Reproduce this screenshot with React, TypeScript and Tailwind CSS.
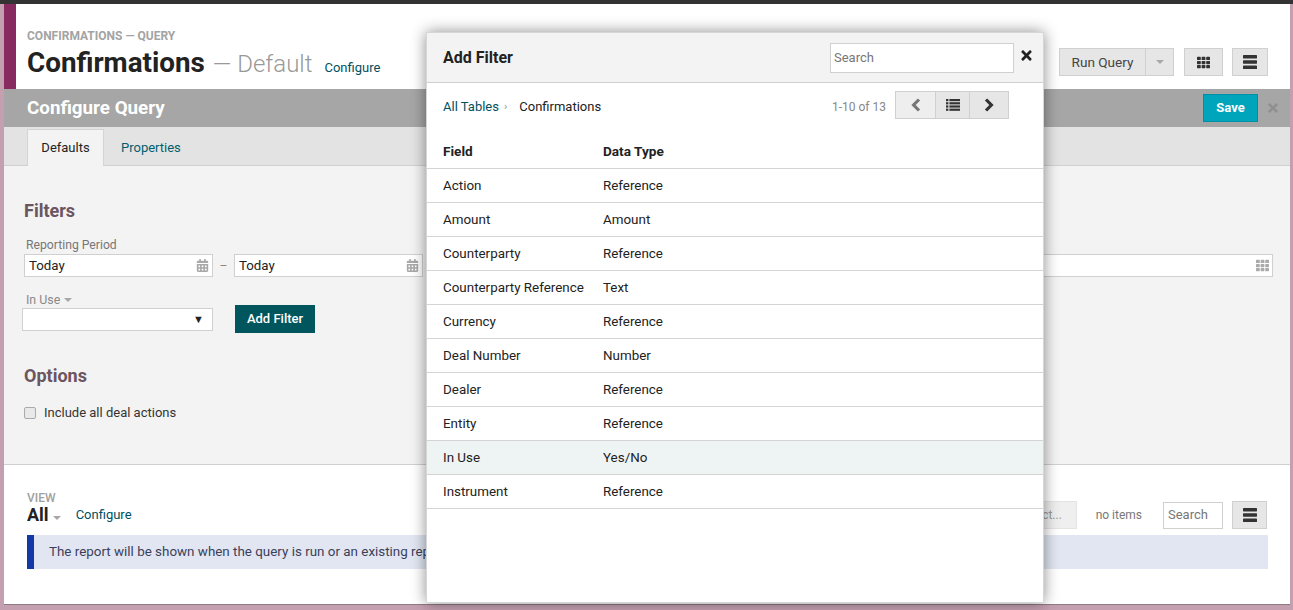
import { FaCalendarAlt, FaTh, FaTimes } from 'react-icons/fa';

const fields = [
  ['Action', 'Reference'],
  ['Amount', 'Amount'],
  ['Counterparty', 'Reference'],
  ['Counterparty Reference', 'Text'],
  ['Currency', 'Reference'],
  ['Deal Number', 'Number'],
  ['Dealer', 'Reference'],
  ['Entity', 'Reference'],
  ['In Use', 'Yes/No'],
  ['Instrument', 'Reference'],
];

const Bars = () => (
  <svg width="14" height="14" viewBox="0 0 14 14" fill="#333">
    <rect x="0" y="0" width="14" height="3.4" rx="0.6" />
    <rect x="0" y="5.3" width="14" height="3.4" rx="0.6" />
    <rect x="0" y="10.6" width="14" height="3.4" rx="0.6" />
  </svg>
);

const Caret = ({ color = '#a8a8a8' }: { color?: string }) => (
  <span className="inline-block h-0 w-0 border-x-[4px] border-t-[4px] border-x-transparent" style={{ borderTopColor: color }} />
);

const Chevron = ({ dir, color }: { dir: 'left' | 'right'; color: string }) => (
  <svg width="10" height="14" viewBox="0 0 10 14" fill="none" stroke={color} strokeWidth="3.2">
    <polyline points={dir === 'left' ? '8,1.5 2.6,7 8,12.5' : '2,1.5 7.4,7 2,12.5'} />
  </svg>
);

const ListIcon = () => (
  <svg width="14" height="12" viewBox="0 0 14 12" fill="#333">
    {[0, 3.2, 6.4, 9.6].map((y) => (
      <g key={y}>
        <rect x="0" y={y} width="2.4" height="2.2" />
        <rect x="3.4" y={y} width="10.6" height="2.2" />
      </g>
    ))}
  </svg>
);

const DateInput = () => (
  <div className="flex h-[23px] w-[189px] items-center justify-between border border-[#d0d0d0] bg-white pl-[4px] pr-[3px] text-[13.3px] text-[#222]">
    <span>Today</span>
    <FaCalendarAlt className="text-[13px] text-[#a9a9a9]" />
  </div>
);

const AddFilterModal = () => (
  <div className="absolute left-[426px] top-[32px] flex h-[571px] w-[618px] flex-col border border-[#d6d6d6] bg-white shadow-[0_0_14px_rgba(0,0,0,0.45)]">
    <div className="flex h-[50px] shrink-0 items-center border-b border-[#cfcfcf] bg-[#f3f3f3] pl-[16px]">
      <span className="text-[16px] font-bold text-[#222]">Add Filter</span>
      <div className="ml-auto flex h-[30px] w-[184px] items-center border border-[#d0d0d0] bg-white pl-[3px] text-[13px] text-[#777]">Search</div>
      <FaTimes className="mb-[5px] ml-[5px] mr-[9px] text-[15px] text-[#222]" />
    </div>
    <div className="flex h-[44px] shrink-0 items-center pl-[16px] pt-[4px] text-[13px]">
      <span className="text-[#00505f]">All Tables</span>
      <span className="ml-[5px] text-[11px] text-[#999]">›</span>
      <span className="ml-[12px] text-[#222]">Confirmations</span>
      <span className="ml-auto text-[12px] text-[#888]">1-10 of 13</span>
      <div className="ml-[9px] mr-[34px] -mt-[4px] flex h-[28px] w-[114px] border border-[#d0d0d0] bg-[#e6e6e6]">
        <span className="flex w-[39px] items-center justify-center bg-[#eeeeee]"><Chevron dir="left" color="#777" /></span>
        <span className="flex w-[35px] items-center justify-center border-x border-[#d0d0d0]"><ListIcon /></span>
        <span className="flex flex-1 items-center justify-center"><Chevron dir="right" color="#333" /></span>
      </div>
    </div>
    <div className="grid h-[42px] shrink-0 grid-cols-[160px_1fr] items-center border-b border-[#d4d4d4] pl-[16px] pt-[8px] text-[13.6px] font-bold text-[#222]">
      <span>Field</span>
      <span>Data Type</span>
    </div>
    {fields.map(([field, type]) => (
      <div
        key={field}
        className={`grid h-[34px] shrink-0 grid-cols-[160px_1fr] items-center border-b border-[#d4d4d4] pl-[16px] pt-[1px] text-[13.4px] text-[#222] ${
          field === 'In Use' ? 'bg-[#eef4f3]' : ''
        }`}
      >
        <span>{field}</span>
        <span>{type}</span>
      </div>
    ))}
  </div>
);

export default function App() {
  return (
    <div className="relative flex h-[610px] flex-col overflow-hidden bg-[#c49fb0] font-['Roboto',sans-serif]">
      <div className="h-[4px] shrink-0 bg-[#333333]" />
      <div className="ml-[4px] mr-[3px] flex h-[601px] shrink-0 flex-col border-b border-[#8f7a84] bg-white">
        {/* Header */}
        <div className="flex h-[85px] shrink-0">
          <div className="w-[12px] bg-[#862a5f]" />
          <div className="pl-[11px] pt-[26px]">
            <div className="text-[12px] font-bold leading-[13px] text-[#a3a3a3]">CONFIRMATIONS — QUERY</div>
            <div className="flex items-baseline pt-[4px] leading-[32px]">
              <span className="text-[27.8px] font-bold text-[#222]">Confirmations</span>
              <span className="ml-[8px] text-[24px] font-light text-[#999]">— Default</span>
              <span className="ml-[12px] text-[13px] text-[#00505f]">Configure</span>
            </div>
          </div>
          <div className="ml-auto flex items-start pr-[22px] pt-[44px]">
            <div className="flex h-[28px] w-[115px] border border-[#d0d0d0] bg-[#e6e6e6] text-[13.6px] text-[#444]">
              <span className="flex flex-1 items-center justify-center border-r border-[#d0d0d0]">Run Query</span>
              <span className="flex w-[27px] items-center justify-center"><Caret /></span>
            </div>
            <div className="ml-[10px] flex h-[28px] w-[39px] items-center justify-center border border-[#d0d0d0] bg-[#e6e6e6] text-[13px] text-[#333]"><FaTh /></div>
            <div className="ml-[9px] flex h-[28px] w-[36px] items-center justify-center border border-[#d0d0d0] bg-[#e6e6e6]"><Bars /></div>
          </div>
        </div>

        {/* Configure bar */}
        <div className="flex h-[38px] shrink-0 items-center bg-[#a6a6a6] pl-[23px] pr-[10px]">
          <span className="text-[18.8px] font-bold text-white">Configure Query</span>
          <div className="ml-auto flex h-[28px] w-[55px] items-center justify-center border border-[#0090a5] bg-[#00a4bb] text-[13px] font-bold text-white">Save</div>
          <FaTimes className="ml-[8px] text-[14px] text-[#8f8f8f]" />
        </div>

        {/* Tabs */}
        <div className="flex h-[39px] shrink-0 items-end border-b border-[#d0d0d0] bg-[#e3e3e3] pl-[23px] text-[13px]">
          <div className="-mb-[1px] flex h-[37px] w-[77px] items-center justify-center border border-b-0 border-[#d4d4d4] bg-[#f3f3f3] text-[#222]">Defaults</div>
          <div className="flex h-[37px] items-center pl-[17px] pt-[2px] text-[#00606f]">Properties</div>
        </div>

        {/* Defaults form */}
        <div className="flex h-[299px] shrink-0 flex-col border-b border-[#d0d0d0] bg-[#f3f3f3] pl-[20px] pr-[17px] pt-[34px]">
          <h2 className="text-[18px] font-bold leading-[21px] text-[#6b5560]">Filters</h2>
          <div className="pl-[2px] pt-[17px] pb-[2px] text-[12.2px] leading-[14px] text-[#777]">Reporting Period</div>
          <div className="flex items-center">
            <DateInput />
            <span className="w-[21px] text-center text-[12px] text-[#888]">–</span>
            <DateInput />
            <div className="ml-auto flex h-[23px] w-[300px] items-center justify-end border border-[#d0d0d0] bg-white pr-[3px] text-[13px] text-[#ababab]"><FaTh /></div>
          </div>
          <div className="flex items-center gap-[4px] pl-[2px] pt-[16px] text-[12.4px] leading-[14px] text-[#8a8a8a]">In Use <Caret /></div>
          <div className="flex items-start">
            <div className="-ml-[2px] mt-[1px] flex h-[23px] w-[191px] items-center justify-end border border-[#d0d0d0] bg-white pr-[8px]">
              <span className="text-[11px] leading-none text-[#222]">▼</span>
            </div>
            <div className="ml-[22px] -mt-[2px] flex h-[28px] w-[80px] items-center justify-center bg-[#00565c] text-[13px] font-medium text-white">Add Filter</div>
          </div>
          <h2 className="pt-[32px] text-[18px] font-bold leading-[21px] text-[#6b5560]">Options</h2>
          <label className="flex items-center gap-[8px] pt-[17px] text-[13px] text-[#333]">
            <span className="h-[12px] w-[12px] rounded-[2px] border border-[#aaa] bg-[#e9e9e9]" />
            Include all deal actions
          </label>
        </div>

        {/* View */}
        <div className="flex flex-1 flex-col pl-[23px] pr-[22px] pt-[27px]">
          <div className="flex items-start">
            <div>
              <div className="text-[12px] font-medium leading-[12px] text-[#a0a0a0]">VIEW</div>
              <div className="flex items-center leading-[21px]">
                <span className="text-[18px] font-bold text-[#222]">All</span>
                <span className="ml-[4px]"><Caret /></span>
                <span className="ml-[15px] text-[13px] text-[#00505f]">Configure</span>
              </div>
            </div>
            <div className="ml-auto mt-[9px] mr-[1px] flex items-center">
              <div className="flex h-[28px] w-[72px] items-center justify-center border border-[#e4e4e4] bg-[#efefef] text-[12px] text-[#999]">Select...</div>
              <span className="ml-[19px] text-[12px] text-[#777]">no items</span>
              <div className="ml-[21px] flex h-[27px] w-[60px] items-center border border-[#d0d0d0] bg-white pl-[4px] text-[13px] text-[#777]">Search</div>
              <div className="ml-[9px] flex h-[28px] w-[35px] items-center justify-center border border-[#d0d0d0] bg-[#e6e6e6]"><Bars /></div>
            </div>
          </div>
          <div className="mt-[6px] flex h-[34px] items-center border-l-[7px] border-[#1239a5] bg-[#e1e6f2] pl-[15px] text-[13.4px] text-[#3b3f5a]">
            The report will be shown when the query is run or an existing report is selected.
          </div>
        </div>
      </div>
      <AddFilterModal />
    </div>
  );
}
